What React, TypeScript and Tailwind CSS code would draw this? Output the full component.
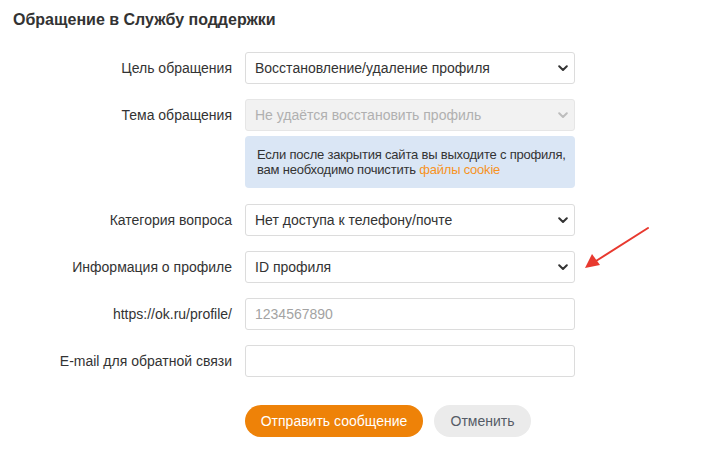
import React from 'react';

function Chevron({ disabled }: { disabled?: boolean }) {
  return (
    <svg width="10" height="7" viewBox="0 0 10 7" className="shrink-0">
      <polyline
        points="1.2,1.3 5,5 8.8,1.3"
        fill="none"
        stroke={disabled ? '#bdbdbd' : '#333333'}
        strokeWidth="2"
        strokeLinecap="round"
        strokeLinejoin="round"
      />
    </svg>
  );
}

function Row({ label, children }: { label: string; children: React.ReactNode }) {
  return (
    <div className="flex items-center">
      <div className="w-[232px] shrink-0 text-right text-[14px] text-[#333]">{label}</div>
      <div className="ml-[13px] w-[330px]">{children}</div>
    </div>
  );
}

function Select({ value, disabled }: { value: string; disabled?: boolean }) {
  return (
    <div
      className={
        disabled
          ? 'flex h-[32px] items-center justify-between rounded-[3px] border border-[#e6e6e6] bg-[#f2f2f2] pl-[9px] pr-[6px] text-[14px] text-[#b0b0b0]'
          : 'flex h-[32px] items-center justify-between rounded-[3px] border border-[#dcdcdc] bg-white pl-[9px] pr-[6px] text-[14px] text-[#333]'
      }
    >
      <span>{value}</span>
      <Chevron disabled={disabled} />
    </div>
  );
}

function TextField({ placeholder }: { placeholder?: string }) {
  return (
    <div className="flex h-[32px] items-center rounded-[3px] border border-[#dcdcdc] bg-white pl-[9px] text-[14px] text-[#a3a3a3]">
      {placeholder}
    </div>
  );
}

export default function App() {
  return (
    <div
      className="relative h-[458px] w-[713px] bg-white"
      style={{ fontFamily: '"Liberation Sans", Arial, sans-serif' }}
    >
      <div className="pl-[13px] pt-[10px]">
        <h1 className="text-[16px] font-bold leading-[19px] text-[#333]">Обращение в Службу поддержки</h1>
      </div>

      <div className="mt-[23px] flex flex-col">
        <Row label="Цель обращения">
          <Select value="Восстановление/удаление профиля" />
        </Row>
        <div className="mt-[15px]">
          <Row label="Тема обращения">
            <Select value="Не удаётся восстановить профиль" disabled />
          </Row>
        </div>
        <div className="ml-[245px] mt-[5px] w-[330px] whitespace-nowrap rounded-[4px] bg-[#dae6f5] px-[12px] py-[11px] text-[13px] leading-[15px] tracking-[-0.2px] text-[#333]">
          Если после закрытия сайта вы выходите с профиля,
          <br />
          вам необходимо почистить <span className="text-[#f7931e]">файлы cookie</span>
        </div>
        <div className="mt-[16px] flex flex-col gap-[15px]">
          <Row label="Категория вопроса">
            <Select value="Нет доступа к телефону/почте" />
          </Row>
          <Row label="Информация о профиле">
            <Select value="ID профиля" />
          </Row>
          <Row label="https://ok.ru/profile/">
            <TextField placeholder="1234567890" />
          </Row>
          <Row label="E-mail для обратной связи">
            <TextField />
          </Row>
        </div>
        <div className="ml-[245px] mt-[28px] flex gap-[11px]">
          <button className="h-[32px] w-[178px] rounded-full bg-[#ee8208] text-[14px] text-white">
            Отправить сообщение
          </button>
          <button className="h-[32px] w-[97px] rounded-full bg-[#ebebeb] text-[14px] text-[#555b66]">
            Отменить
          </button>
        </div>
      </div>

      <svg className="pointer-events-none absolute left-0 top-0" width="713" height="458">
        <line x1="648" y1="228" x2="596" y2="261" stroke="#e8392f" strokeWidth="2" strokeLinecap="round" />
        <polygon points="585,268 592,254 600,265" fill="#e8392f" />
      </svg>
    </div>
  );
}
